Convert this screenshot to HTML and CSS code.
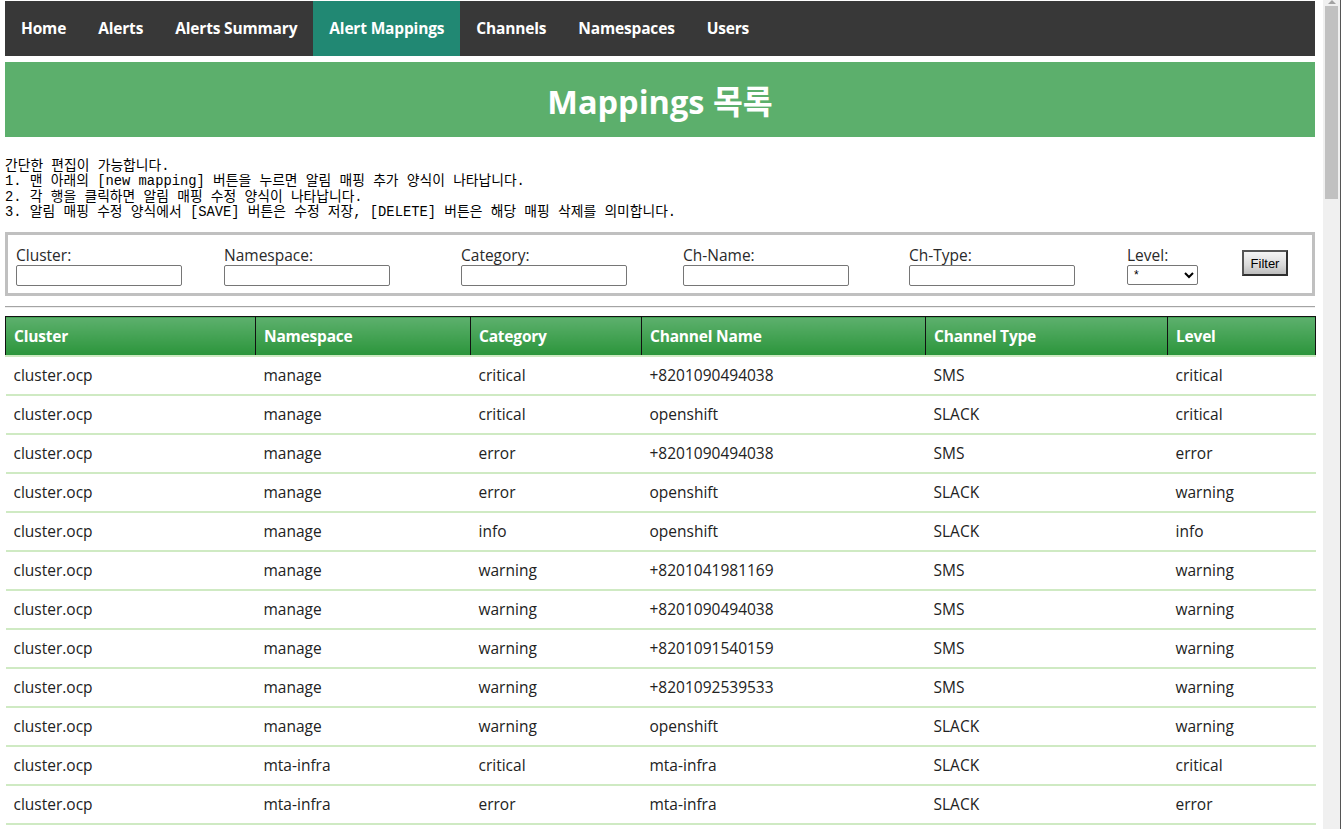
FILE: index.html
```html
<!DOCTYPE html>
<html lang="ko">
<head>
<meta charset="utf-8">
<title>Alert Mappings</title>
<link rel="stylesheet" href="styles.css">
</head>
<body>
<div class="page">
  <nav class="topnav">
    <a class="nav-item" href="#">Home</a>
    <a class="nav-item" href="#">Alerts</a>
    <a class="nav-item" href="#">Alerts Summary</a>
    <a class="nav-item active" href="#">Alert Mappings</a>
    <a class="nav-item" href="#">Channels</a>
    <a class="nav-item" href="#">Namespaces</a>
    <a class="nav-item" href="#">Users</a>
  </nav>
  <header class="banner"><h1>Mappings 목록</h1></header>
  <pre class="help">간단한 편집이 가능합니다.
1. 맨 아래의 [new mapping] 버튼을 누르면 알림 매핑 추가 양식이 나타납니다.
2. 각 행을 클릭하면 알림 매핑 수정 양식이 나타납니다.
3. 알림 매핑 수정 양식에서 [SAVE] 버튼은 수정 저장, [DELETE] 버튼은 해당 매핑 삭제를 의미합니다.</pre>
  <form class="filter">
    <label class="field">Cluster:<input type="text" class="txt"></label>
    <label class="field">Namespace:<input type="text" class="txt"></label>
    <label class="field">Category:<input type="text" class="txt"></label>
    <label class="field">Ch-Name:<input type="text" class="txt"></label>
    <label class="field">Ch-Type:<input type="text" class="txt"></label>
    <label class="field">Level:<select class="sel"><option>*</option><option>critical</option><option>error</option><option>warning</option><option>info</option></select></label>
    <div class="btn-cell"><button type="button" class="btn">Filter</button></div>
  </form>
  <hr class="sep">
  <table class="grid">
    <colgroup>
      <col class="c1"><col class="c2"><col class="c3"><col class="c4"><col class="c5"><col class="c6">
    </colgroup>
    <thead>
      <tr><th>Cluster</th><th>Namespace</th><th>Category</th><th>Channel Name</th><th>Channel Type</th><th>Level</th></tr>
    </thead>
    <tbody>
      <tr><td>cluster.ocp</td><td>manage</td><td>critical</td><td>+8201090494038</td><td>SMS</td><td>critical</td></tr>
      <tr><td>cluster.ocp</td><td>manage</td><td>critical</td><td>openshift</td><td>SLACK</td><td>critical</td></tr>
      <tr><td>cluster.ocp</td><td>manage</td><td>error</td><td>+8201090494038</td><td>SMS</td><td>error</td></tr>
      <tr><td>cluster.ocp</td><td>manage</td><td>error</td><td>openshift</td><td>SLACK</td><td>warning</td></tr>
      <tr><td>cluster.ocp</td><td>manage</td><td>info</td><td>openshift</td><td>SLACK</td><td>info</td></tr>
      <tr><td>cluster.ocp</td><td>manage</td><td>warning</td><td>+8201041981169</td><td>SMS</td><td>warning</td></tr>
      <tr><td>cluster.ocp</td><td>manage</td><td>warning</td><td>+8201090494038</td><td>SMS</td><td>warning</td></tr>
      <tr><td>cluster.ocp</td><td>manage</td><td>warning</td><td>+8201091540159</td><td>SMS</td><td>warning</td></tr>
      <tr><td>cluster.ocp</td><td>manage</td><td>warning</td><td>+8201092539533</td><td>SMS</td><td>warning</td></tr>
      <tr><td>cluster.ocp</td><td>manage</td><td>warning</td><td>openshift</td><td>SLACK</td><td>warning</td></tr>
      <tr><td>cluster.ocp</td><td>mta-infra</td><td>critical</td><td>mta-infra</td><td>SLACK</td><td>critical</td></tr>
      <tr><td>cluster.ocp</td><td>mta-infra</td><td>error</td><td>mta-infra</td><td>SLACK</td><td>error</td></tr>
    </tbody>
  </table>
</div>
<div class="scrollbar">
  <div class="sb-arrow"></div>
  <div class="sb-thumb"></div>
</div>
</body>
</html>
```
FILE: styles.css
```css
html, body {
  margin: 0;
  height: 100%;
}
body {
  display: flex;
  overflow: hidden;
  font-family: "Open Sans", "Noto Sans CJK KR", sans-serif;
  color: #222;
  background: #fff;
}
.page {
  flex: 1;
  min-width: 0;
  padding: 1px 8px 0 5px;
  overflow: hidden;
}
.topnav {
  display: flex;
  height: 55px;
  background: #383838;
}
.nav-item {
  display: flex;
  align-items: center;
  padding: 0 16px 1px;
  color: #fff;
  text-decoration: none;
  font-weight: 700;
  font-size: 15.5px;
  letter-spacing: -0.17px;
}
.nav-item.active {
  background: #218873;
}
.banner {
  margin-top: 6px;
  height: 75px;
  background: #5caf6c;
  display: flex;
  align-items: center;
  justify-content: center;
}
.banner h1 {
  margin: 0;
  color: #fff;
  font-size: 32.5px;
  font-weight: 700;
}
.help {
  margin: 22px 0 12px;
  font-family: "Liberation Mono", "Noto Sans CJK KR", monospace;
  font-size: 13.8px;
  line-height: 15.3px;
  color: #000;
}
.filter {
  border: 3px solid #c0c0c0;
  height: 58px;
  box-sizing: content-box;
  padding: 0 0 0 8px;
  display: grid;
  grid-template-columns: 208px 237px 222px 226px 218px 115px 46px;
  align-items: center;
}
.field {
  display: flex;
  flex-direction: column;
  font-size: 15.5px;
  font-weight: 400;
  line-height: 17px;
  color: #2a2a2a;
  padding-top: 4px;
}
.txt {
  margin-top: 1px;
  width: 166px;
  height: 21px;
  box-sizing: border-box;
  border: 1px solid #767676;
  border-radius: 2px;
  padding: 1px 2px;
}
.sel {
  margin-top: 1px;
  width: 71px;
  height: 20px;
  box-sizing: border-box;
  border: 1px solid #767676;
  border-radius: 2px;
  font-family: "Liberation Sans", sans-serif;
  font-size: 12px;
  background: #fff;
  padding: 0 2px;
}
.btn-cell {
  display: flex;
  align-items: center;
  padding-bottom: 2px;
}
.btn {
  width: 46px;
  height: 26px;
  box-sizing: border-box;
  border: 2px solid #2f2f2f;
  border-top-color: #555;
  border-left-color: #555;
  background: linear-gradient(#f4f4f4, #dadada 60%, #bdbdbd);
  font-family: "Liberation Sans", sans-serif;
  font-size: 13px;
  color: #000;
  padding: 0;
}
.sep {
  margin: 10px 0 8px;
  border: 0;
  border-top: 1px solid #a4a4a4;
  border-bottom: 1px solid #eeeeee;
  height: 0;
}
.grid {
  width: 1310px;
  table-layout: fixed;
  border-collapse: collapse;
}
.c1 { width: 250px; }
.c2 { width: 215px; }
.c3 { width: 171px; }
.c4 { width: 284px; }
.c5 { width: 242px; }
.c6 { width: 148px; }
.grid th {
  height: 39px;
  box-sizing: border-box;
  text-align: left;
  padding: 0 8px;
  color: #fff;
  font-size: 15.5px;
  font-weight: 700;
  letter-spacing: -0.2px;
  background: linear-gradient(#5db06d, #2b953b);
  border: 1px solid #111;
  border-bottom: 2px solid #cdeac1;
}
.grid td {
  height: 39px;
  box-sizing: border-box;
  padding: 0 8px;
  font-size: 15.5px;
  font-weight: 400;
  color: #222;
  border-bottom: 2px solid #cfeac3;
  white-space: nowrap;
}
.scrollbar {
  width: 18px;
  flex: none;
  background: #f0f0f0;
  border-right: 1px solid #555;
  box-sizing: border-box;
}
.sb-arrow {
  margin: 0 auto;
  width: 0;
  height: 0;
  border-left: 4px solid transparent;
  border-right: 4px solid transparent;
  border-bottom: 4px solid #a3a3a3;
}
.sb-thumb {
  margin: 2px 2px 0 2px;
  height: 193px;
  background: #c1c1c1;
}
```
